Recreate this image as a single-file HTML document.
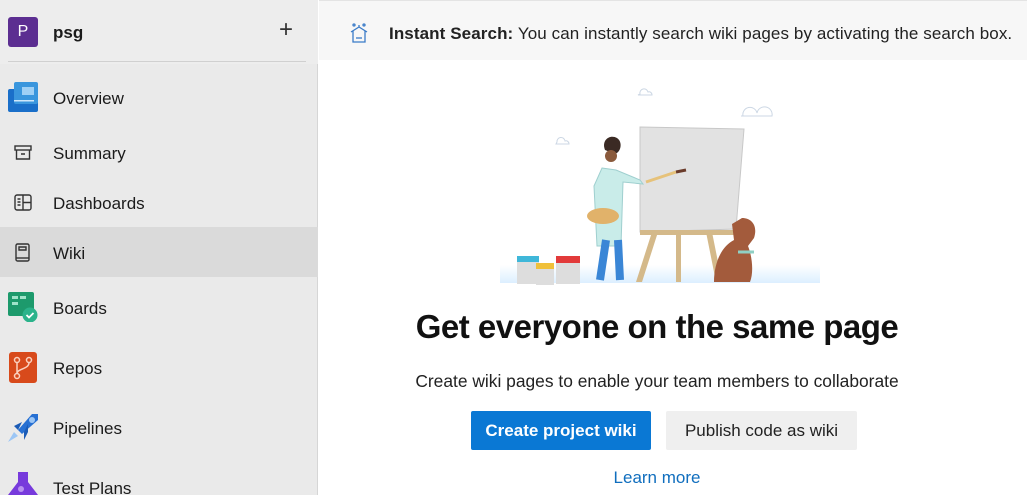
<!DOCTYPE html>
<html><head><meta charset="utf-8"><style>
*{margin:0;padding:0;box-sizing:border-box}
body{width:1027px;height:495px;overflow:hidden;font-family:"Liberation Sans",sans-serif;background:#fff;position:relative;color:#201f1e}
#side{position:absolute;left:0;top:0;width:318px;height:495px;background:#eaeaea;border-right:1px solid #d6d6d6}
#top{position:absolute;left:0;top:0;width:318px;height:64px;background:#ededed}
.sep{position:absolute;left:8px;top:61px;width:298px;height:1px;background:#d0d0d0}
.av{position:absolute;left:8px;top:17px;width:30px;height:30px;background:#5c2e91;border-radius:3px;color:#fff;font-size:16px;text-align:center;line-height:30px}
.item{position:absolute;left:53px;font-size:17px;color:#1b1b1b}
.ic{position:absolute}
#main{position:absolute;left:319px;top:0;width:708px;height:495px;background:#fff}
#banner{position:absolute;left:319px;top:0;width:708px;height:60px;background:#f7f7f7;border-top:1px solid #e4e4e4}
.btn{position:absolute;height:39px;border-radius:2px;font-size:17px;line-height:39px;text-align:center}
</style></head><body>
<div id="side"></div>
<div id="top"></div>
<div class="sep"></div>
<div class="av">P</div>
<div class="item" style="top:23px;font-weight:bold">psg</div>
<div style="position:absolute;left:279px;top:16px;font-size:24px;color:#333;font-weight:300">+</div>
<div style="position:absolute;left:0;top:227px;width:318px;height:50px;background:#dadada"></div>
<div class="item" style="top:89px">Overview</div>
<div class="item" style="top:144px">Summary</div>
<div class="item" style="top:194px">Dashboards</div>
<div class="item" style="top:244px">Wiki</div>
<div class="item" style="top:299px">Boards</div>
<div class="item" style="top:359px">Repos</div>
<div class="item" style="top:419px">Pipelines</div>
<div class="item" style="top:479px">Test Plans</div>
<svg class="ic" style="left:8px;top:82px" width="30" height="30"><rect x="0" y="7" width="30" height="23" rx="2" fill="#1a6fc9"/><rect x="6" y="0" width="24" height="22" rx="2" fill="#3a96dd"/><rect x="14" y="5" width="12" height="8" fill="#9fd0f5"/><rect x="6" y="18" width="20" height="1.5" fill="#cfe7fa"/></svg>
<svg class="ic" style="left:14px;top:145px" width="18" height="16" fill="none" stroke="#333" stroke-width="1.4"><rect x="1" y="1" width="16" height="4"/><path d="M2.5 5v9h13V5M7 9h4"/></svg>
<svg class="ic" style="left:14px;top:194px" width="18" height="17" fill="none" stroke="#333" stroke-width="1.4"><rect x="1" y="1" width="16" height="15" rx="2"/><path d="M9 1v15M3.5 5h3M3.5 8h3M3.5 11h3M9 8.5h8"/></svg>
<svg class="ic" style="left:15px;top:243px" width="15" height="19" fill="none" stroke="#333" stroke-width="1.4"><rect x="1" y="1" width="13" height="17" rx="1.5"/><path d="M4 4h7v3H4z"/><path d="M1 15h13"/></svg>
<svg class="ic" style="left:8px;top:292px" width="30" height="30"><rect x="0" y="0" width="26" height="24" rx="2" fill="#1d9a6c"/><rect x="4" y="4" width="6" height="3" fill="#9fe3c9"/><rect x="12" y="4" width="6" height="3" fill="#9fe3c9"/><rect x="4" y="10" width="6" height="3" fill="#9fe3c9"/><circle cx="22" cy="23" r="7.5" fill="#2bb38b"/><path d="M18.5 23l2.5 2.5 4.5-4.5" stroke="#fff" stroke-width="1.8" fill="none"/></svg>
<svg class="ic" style="left:9px;top:352px" width="28" height="31"><rect x="0" y="0" width="28" height="31" rx="3" fill="#d84a1b"/><g stroke="#fbd2c0" stroke-width="1.5" fill="none"><circle cx="8" cy="8" r="2.5"/><circle cx="20" cy="8" r="2.5"/><circle cx="8" cy="24" r="2.5"/><path d="M8 10.5v11M20 10.5c0 7-12 6-12 11"/></g></svg>
<svg class="ic" style="left:8px;top:412px" width="30" height="30"><path d="M10 18L24 2h6v6L14 22z" fill="#2770d3"/><circle cx="24" cy="8" r="3" fill="#9cc6f5"/><path d="M6 14l8-4-4 8zM16 20l4-8 0 8-4 8z" fill="#1a5bb6"/><path d="M0 30l6-10 4 4z" fill="#9cc6f5"/></svg>
<svg class="ic" style="left:8px;top:472px" width="30" height="23"><path d="M10 0h10v10l10 13H0l10-13z" fill="#773adc"/><circle cx="13" cy="17" r="3" fill="#b892f0"/></svg>
<div id="main"></div>
<div id="banner"></div>
<svg style="position:absolute;left:349px;top:22px" width="20" height="22" fill="none" stroke="#3a7bc8" stroke-width="1.3"><path d="M2 10l8-5 8 5M4 9v11h12V9M10 5V3"/><circle cx="5" cy="3" r="1"/><circle cx="15" cy="3" r="1"/><path d="M7 16h6"/></svg>
<div style="position:absolute;left:389px;top:24px;font-size:17px;color:#222;letter-spacing:0.1px"><b>Instant Search:</b> You can instantly search wiki pages by activating the search box.</div>
<div style="position:absolute;left:372px;top:60px;width:550px;height:10px;background:#fff"></div>
<svg style="position:absolute;left:480px;top:70px" width="340" height="220">
<defs><linearGradient id="g" x1="0" x2="0" y1="0" y2="1"><stop offset="0" stop-color="#fff"/><stop offset="1" stop-color="#dcefff"/></linearGradient></defs>
<rect x="20" y="195" width="320" height="18" fill="url(#g)"/>
<g fill="none" stroke="#ccd7e4" stroke-width="1"><path d="M160 24a4 4 0 0 1 8-2a3 3 0 0 1 4 3h-14z"/><path d="M263 46a7 7 0 0 1 14-3a5 5 0 0 1 15 3h-31z"/><path d="M77 72a4 4 0 0 1 8-1a3 3 0 0 1 4 3h-13z"/></g>
<path d="M160 57l104 2-8 100-96 3z" fill="#e2e2e2" stroke="#c8c8c8"/>
<path d="M172 162l-16 50h6l16-50zM226 162l10 50h6l-10-50zM196 162v50h5v-50z" fill="#d4b98a"/>
<rect x="160" y="160" width="96" height="5" fill="#d4b98a"/>
<path d="M125 80c-4-10 5-16 12-12 6 4 4 14-2 16z" fill="#3b2a24"/>
<circle cx="131" cy="86" r="6" fill="#8a5a3c"/>
<path d="M122 98l14 2 24 10 3 4-20-2-2 64h-24l-3-60z" fill="#c9ece9" stroke="#9fcfcf"/>
<path d="M126 170l-6 40M138 170l2 40" stroke="#3a86d6" stroke-width="8"/>
<ellipse cx="123" cy="146" rx="16" ry="8" fill="#e1b26a"/>
<path d="M166 112l30-10" stroke="#e6c27a" stroke-width="3"/><path d="M196 102l10-2" stroke="#6a3b2a" stroke-width="3"/>
<g><rect x="37" y="188" width="22" height="26" fill="#ddd"/><rect x="37" y="186" width="22" height="6" fill="#3fb7d9"/><rect x="56" y="195" width="18" height="20" fill="#ddd"/><rect x="56" y="193" width="18" height="6" fill="#f0c03a"/><rect x="76" y="188" width="24" height="26" fill="#ddd"/><rect x="76" y="186" width="24" height="7" fill="#e23a3a"/></g>
<path d="M262 148c10 0 16 8 12 20l-6 8c4 10 6 26 2 36h-36c0-20 8-36 20-42l-2-16z" fill="#a35b3c"/>
<path d="M258 182h16" stroke="#8fd0c4" stroke-width="3"/>
</svg>
<div style="position:absolute;left:319px;top:308px;width:676px;text-align:center;font-size:33px;font-weight:bold;color:#111;letter-spacing:-0.5px">Get everyone on the same page</div>
<div style="position:absolute;left:319px;top:371px;width:676px;text-align:center;font-size:17.4px;color:#222">Create wiki pages to enable your team members to collaborate</div>
<div class="btn" style="left:471px;top:411px;width:180px;background:#0a78d4;color:#fff;font-weight:bold">Create project wiki</div>
<div class="btn" style="left:666px;top:411px;width:191px;background:#efefef;color:#222">Publish code as wiki</div>
<div style="position:absolute;left:319px;top:468px;width:676px;text-align:center;font-size:17px;color:#106ebe">Learn more</div>
</body></html>
